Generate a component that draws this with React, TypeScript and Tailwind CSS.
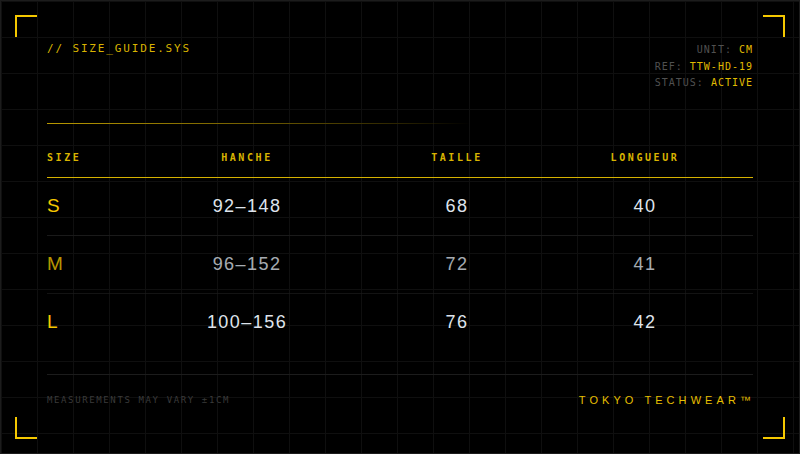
const rows = [
  { size: "S", hanche: "92–148", taille: "68", longueur: "40", dim: false, line: true },
  { size: "M", hanche: "96–152", taille: "72", longueur: "41", dim: true, line: true },
  { size: "L", hanche: "100–156", taille: "76", longueur: "42", dim: false, line: false },
];

const mono = "font-['DejaVu_Sans_Mono',monospace]";
const sans = "font-['Liberation_Sans',Arial,sans-serif]";

function Corner({ pos }: { pos: string }) {
  return <div className={`absolute h-[22px] w-[22px] border-[#f5c800] ${pos}`} />;
}

export default function App() {
  return (
    <div className="relative h-[454px] w-[800px] overflow-hidden border border-[#1c1c1c] bg-black bg-[linear-gradient(to_right,#0f0f0f_1px,transparent_1px),linear-gradient(to_bottom,#0f0f0f_1px,transparent_1px)] bg-[size:36px_36px] px-[46px] pt-[41px]">
      <Corner pos="left-[14px] top-[14px] border-l-2 border-t-2" />
      <Corner pos="right-[14px] top-[14px] border-r-2 border-t-2" />
      <Corner pos="bottom-[14px] left-[14px] border-b-2 border-l-2" />
      <Corner pos="bottom-[14px] right-[14px] border-b-2 border-r-2" />

      <div className="flex items-start justify-between">
        <div className={`${mono} text-[11px] leading-[14px] tracking-[1.85px] text-[#d9b400]`}>
          // SIZE_GUIDE.SYS
        </div>
        <div className={`${mono} text-right text-[10px] leading-[16.5px] tracking-[1px]`}>
          <div>
            <span className="text-[#505050]">UNIT: </span>
            <span className="text-[#e0bb00]">CM</span>
          </div>
          <div>
            <span className="text-[#505050]">REF: </span>
            <span className="text-[#e0bb00]">TTW-HD-19</span>
          </div>
          <div>
            <span className="text-[#505050]">STATUS: </span>
            <span className="text-[#e0bb00]">ACTIVE</span>
          </div>
        </div>
      </div>

      <div className="mt-[31px] h-px w-full bg-[linear-gradient(to_right,#b89800,#6e5b00_30%,#2a2300_50%,transparent_60%)]" />

      <div
        className={`${mono} grid grid-cols-[71px_258px_162px_214px] pb-[12px] pt-[27px] text-[10px] font-bold leading-[14px] tracking-[0.26em] text-[#d9b400]`}
      >
        <div>SIZE</div>
        <div className="text-center">HANCHE</div>
        <div className="text-center">TAILLE</div>
        <div className="text-center">LONGUEUR</div>
      </div>
      <div className="h-px w-full bg-[#d6b200]" />

      {rows.map((r) => (
        <div key={r.size} className={r.dim ? "opacity-75" : ""}>
          <div
            className={`grid h-[57px] grid-cols-[71px_258px_162px_214px] items-center ${sans}`}
          >
            <div className="text-[19px] text-[#f5c800]">{r.size}</div>
            <div className="text-center text-[18px] tracking-[0.08em] text-[#dfe4ec]">{r.hanche}</div>
            <div className="text-center text-[18px] tracking-[0.08em] text-[#dfe4ec]">{r.taille}</div>
            <div className="text-center text-[18px] tracking-[0.08em] text-[#dfe4ec]">{r.longueur}</div>
          </div>
          {r.line && <div className="h-px w-full bg-[#1a1a1a]" />}
        </div>
      ))}

      <div className="mt-[23px] h-px w-full bg-[#1c1c1c]" />
      <div className="flex items-center justify-between pt-[19px]">
        <div className={`${mono} text-[9px] leading-[12px] tracking-[0.18em] text-[#3a3a3a]`}>
          MEASUREMENTS MAY VARY ±1CM
        </div>
        <div className={`${sans} mr-[-2px] text-[11px] leading-[12px] tracking-[0.37em] text-[#e6bf00]`}>
          TOKYO TECHWEAR™
        </div>
      </div>
    </div>
  );
}
